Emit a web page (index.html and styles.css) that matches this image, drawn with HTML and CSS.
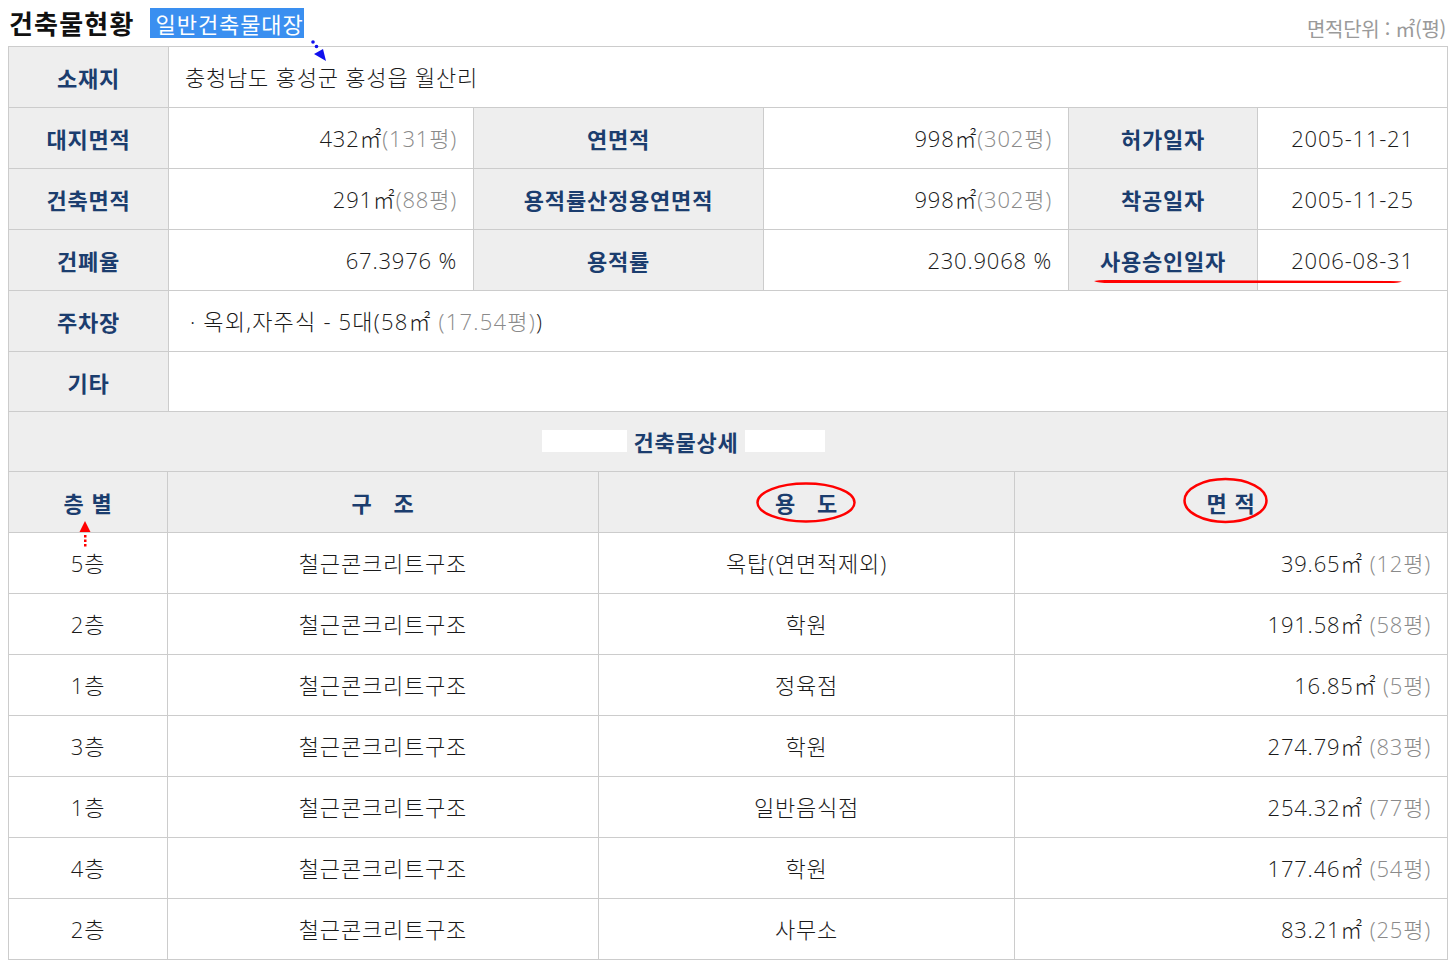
FILE: index.html
```html
<!DOCTYPE html>
<html lang="ko">
<head>
<meta charset="utf-8">
<link rel="stylesheet" href="styles.css">
</head>
<body>
<div class="page">
  <div class="titlebar">
    <h1 class="title">건축물현황</h1>
    <span class="badge">일반건축물대장</span>
    <span class="unit">면적단위 : ㎡(평)</span>
  </div>
  <table class="info">
    <colgroup><col class="c1"><col class="c2"><col class="c3"><col class="c4"><col class="c5"><col class="c6"></colgroup>
    <tr><th>소재지</th><td colspan="5" class="left">충청남도 홍성군 홍성읍 월산리</td></tr>
    <tr><th>대지면적</th><td class="num">432㎡<span class="py">(131평)</span></td><th>연면적</th><td class="num">998㎡<span class="py">(302평)</span></td><th>허가일자</th><td class="date">2005-11-21</td></tr>
    <tr><th>건축면적</th><td class="num">291㎡<span class="py">(88평)</span></td><th>용적률산정용연면적</th><td class="num">998㎡<span class="py">(302평)</span></td><th>착공일자</th><td class="date">2005-11-25</td></tr>
    <tr><th>건폐율</th><td class="num">67.3976 %</td><th>용적률</th><td class="num">230.9068 %</td><th>사용승인일자</th><td class="date">2006-08-31</td></tr>
    <tr><th>주차장</th><td colspan="5" class="left park">· 옥외,자주식 - 5대(58㎡ <span class="py">(17.54평)</span>)</td></tr>
    <tr class="short"><th>기타</th><td colspan="5" class="left"></td></tr>
  </table>
  <table class="detail">
    <colgroup><col class="d1"><col class="d2"><col class="d3"><col class="d4"></colgroup>
    <tr class="short"><th colspan="4" class="section"><span class="sec-group"><span class="mask m1"></span><span>건축물상세</span><span class="mask m2"></span></span></th></tr>
    <tr><th>층 별</th><th>구&nbsp;&nbsp;&nbsp;조</th><th>용&nbsp;&nbsp;&nbsp;도</th><th>면 적</th></tr>
    <tr><td>5층</td><td>철근콘크리트구조</td><td>옥탑(연면적제외)</td><td class="num">39.65㎡ <span class="py">(12평)</span></td></tr>
    <tr><td>2층</td><td>철근콘크리트구조</td><td>학원</td><td class="num">191.58㎡ <span class="py">(58평)</span></td></tr>
    <tr><td>1층</td><td>철근콘크리트구조</td><td>정육점</td><td class="num">16.85㎡ <span class="py">(5평)</span></td></tr>
    <tr><td>3층</td><td>철근콘크리트구조</td><td>학원</td><td class="num">274.79㎡ <span class="py">(83평)</span></td></tr>
    <tr><td>1층</td><td>철근콘크리트구조</td><td>일반음식점</td><td class="num">254.32㎡ <span class="py">(77평)</span></td></tr>
    <tr><td>4층</td><td>철근콘크리트구조</td><td>학원</td><td class="num">177.46㎡ <span class="py">(54평)</span></td></tr>
    <tr><td>2층</td><td>철근콘크리트구조</td><td>사무소</td><td class="num">83.21㎡ <span class="py">(25평)</span></td></tr>
  </table>
</div>
<svg class="marks" width="1452" height="966" viewBox="0 0 1452 966" xmlns="http://www.w3.org/2000/svg">
  <circle cx="313" cy="42" r="1.8" fill="#1010ee"/>
  <circle cx="316.5" cy="46.5" r="1.8" fill="#1010ee"/>
  <polygon points="314,54 323,49 326,61" fill="#1010ee"/>
  <polygon points="85,521 79.5,532 90.5,532" fill="#ff0000"/>
  <rect x="84" y="535" width="2.5" height="2.5" fill="#ff0000"/>
  <rect x="84" y="539.5" width="2.5" height="2.5" fill="#ff0000"/>
  <rect x="84" y="544" width="2.5" height="2.5" fill="#ff0000"/>
  <path d="M1094 281 Q1100 279.5 1110 280 L1390 281 Q1400 281 1402 281.5 Q1398 283 1390 283 L1110 283 Q1098 283 1094 281 Z" fill="#ff0000"/>
  <ellipse cx="806" cy="502.5" rx="48.5" ry="19" fill="none" stroke="#ff0000" stroke-width="2.5"/>
  <ellipse cx="1225.5" cy="500.5" rx="41" ry="21.5" fill="none" stroke="#ff0000" stroke-width="2.5"/>
</svg>
</body>
</html>
```
FILE: styles.css
```css
html, body {
  margin: 0;
  padding: 0;
  background: #ffffff;
}
body {
  font-family: "Noto Sans CJK KR", "Noto Sans", sans-serif;
  color: #222222;
}
.page {
  padding: 0 6px 0 8px;
}
.titlebar {
  height: 46px;
  display: flex;
  align-items: flex-start;
  box-sizing: border-box;
  padding-top: 8px;
}
.title {
  margin: 0 0 0 1px;
  font-size: 26px;
  font-weight: 700;
  line-height: 30px;
  color: #111111;
  letter-spacing: 1.2px;
}
.badge {
  margin-left: 15px;
  background: #3a8ff0;
  color: #ffffff;
  font-size: 22px;
  letter-spacing: 0.9px;
  line-height: 30px;
  height: 30px;
  padding: 0 0 0 6px;
}
.unit {
  margin-left: auto;
  margin-top: 9px;
  font-size: 20px;
  line-height: 24px;
  color: #9a9a9a;
  letter-spacing: -0.3px;
}
table {
  border-collapse: collapse;
  table-layout: fixed;
  width: 1439px;
}
th, td {
  border: 1px solid #cccccc;
  height: 60px;
  padding: 0 16px;
  font-size: 22px;
  letter-spacing: 0.8px;
  text-align: center;
  vertical-align: middle;
  line-height: 26px;
  white-space: nowrap;
}
tr.short th, tr.short td {
  height: 59px;
}
th {
  background: #eeeeee;
  color: #1b3d6e;
  font-weight: 700;
}
td {
  font-family: "Open Sans", "Noto Sans CJK KR", sans-serif;
  font-weight: 300;
  color: #1a1a1a;
}
.info .c1 { width: 160px; }
.info .c2 { width: 305px; }
.info .c3 { width: 290px; }
.info .c4 { width: 305px; }
.info .c5 { width: 189px; }
.info .c6 { width: 190px; }
.detail .d1 { width: 159px; }
.detail .d2 { width: 431px; }
.detail .d3 { width: 416px; }
.detail .d4 { width: 433px; }
.detail tr:first-child th { border-top: none; }
td.left {
  text-align: left;
}
td.num {
  text-align: right;
}
td.date {
  text-align: center;
}
td.park {
  padding-left: 21px;
  letter-spacing: 1.2px;
}
.py {
  color: #8a8a8a;
}
th.section {
  padding-left: 16px;
  padding-right: 105px;
}
.sec-group {
  display: inline-flex;
  align-items: center;
  gap: 6px;
}
.mask {
  display: inline-block;
  height: 22px;
  background: #ffffff;
}
.mask.m1 { width: 85px; }
.mask.m2 { width: 80px; }
.marks {
  position: absolute;
  top: 0;
  left: 0;
  pointer-events: none;
}
```
